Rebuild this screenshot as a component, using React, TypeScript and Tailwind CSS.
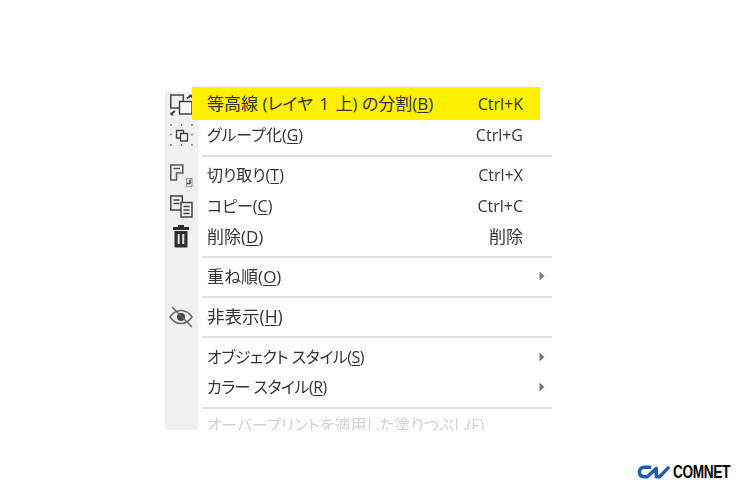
const jp = "font-['Open_Sans','Noto_Sans_CJK_JP',sans-serif]";

function U({ children }: { children: React.ReactNode }) {
  return <span className="underline underline-offset-2 decoration-1">{children}</span>;
}

function Arrow() {
  return (
    <svg width="6" height="10" viewBox="0 0 6 10" className="ml-auto mr-[7px]">
      <path d="M0.5 0.500 L5.500 5 L0.500 9.500 Z" fill="#777" />
    </svg>
  );
}

function Row({ h, icon, label, shortcut, arrow, disabled }: { h: string; icon?: React.ReactNode; label: React.ReactNode; shortcut?: React.ReactNode; arrow?: boolean; disabled?: boolean }) {
  return (
    <div className={`flex items-center ${h}`}>
      <div className="w-[33px] self-stretch bg-[#f0f0f0] flex items-center pl-[5px] shrink-0">{icon}</div>
      <div className={`pl-[9px] whitespace-nowrap ${disabled ? "text-[#d2d2d2] tracking-[-0.2px]" : ""}`}>{label}</div>
      {shortcut && <div className="ml-auto pr-[29px]">{shortcut}</div>}
      {arrow && <Arrow />}
    </div>
  );
}

function Sep({ h, top }: { h: string; top: string }) {
  return (
    <div className={`flex ${h}`}>
      <div className="w-[33px] bg-[#f0f0f0] shrink-0" />
      <div className={`flex-1 ml-[4px] ${top}`}>
        <div className="h-[2px] bg-[#e0e0e0]" />
      </div>
    </div>
  );
}

export default function App() {
  return (
    <div className="w-[750px] h-[500px] bg-white overflow-hidden flex flex-col">
      <div className={`ml-[165px] mt-[87px] w-[387px] h-[343px] overflow-hidden text-[16px] leading-none text-[#333] [font-feature-settings:'palt'] blur-[0.5px] ${jp}`}>
        <div className="flex h-[33px]">
          <div className="w-[27px] mt-[5px] bg-[#f0f0f0] shrink-0 pl-[5px]">
            <svg width="23" height="24" viewBox="0 0 23 24" fill="none" stroke="#444" strokeWidth="1.5" className="mt-[2px] overflow-visible">
              <path d="M0.800 1h12.500v13H0.800z" />
              <path d="M9.500 7.500h12.500v12.500H9.500z" fill="#f7f7f7" />
              <path d="M17 4.500l4-3" strokeWidth="2" />
              <path d="M18.500 0.800h3.500v3.500z" fill="#444" stroke="none" />
              <path d="M5 17l-4 3" strokeWidth="2" />
              <path d="M0.500 21.500v-3.500l3.500 3.500z" fill="#444" stroke="none" />
            </svg>
          </div>
          <div className="w-[348px] bg-[#fff000] flex items-center pl-[15px] whitespace-nowrap">
            <span className="text-[17px]">等高線 (レイヤ <span className="mx-[2px]">1</span> 上) の分割(<U>B</U>)</span>
            <span className="ml-auto pr-[17px]">Ctrl+K</span>
          </div>
        </div>
        <Row
          h="h-[30px]"
          label={<>グループ化(<U>G</U>)</>}
          shortcut="Ctrl+G"
          icon={
            <svg width="23" height="22" viewBox="0 0 23 22" fill="none" stroke="#444" strokeWidth="1.300">
              <path d="M1 1h.01M11.500 1h.01M22 1h.01M1 10.500h.01M22 10.500h.01M1 21h.01M11.500 21h.01M22 21h.01" stroke="#777" strokeWidth="1.800" strokeLinecap="round" />
              <path d="M6.500 6.500h7v7.500h-7z" />
              <path d="M10.500 9.500h7v7.500h-7z" fill="#f0f0f0" />
            </svg>
          }
        />
        <Sep h="h-[10px]" top="pt-[5px]" />
        <Row
          h="h-[30px]"
          label={<>切り取り(<U>T</U>)</>}
          shortcut="Ctrl+X"
          icon={
            <svg width="23" height="24" viewBox="0 0 23 24" fill="none" stroke="#555" strokeWidth="1.500">
              <path d="M0.800 2h12v8H6.500v7H0.800z" />
              <path d="M3.500 5.500h6.500" />
              <path d="M16.500 15.500h5.500v8h-5.500z" stroke="#999" strokeWidth="1.200" />
              <path d="M17 20.500h3V16.500" stroke="#444" strokeWidth="1.400" />
            </svg>
          }
        />
        <Row
          h="h-[31px]"
          label={<>コピー(<U>C</U>)</>}
          shortcut="Ctrl+C"
          icon={
            <svg width="23" height="24" viewBox="0 0 23 24" fill="none" stroke="#444" strokeWidth="1.500">
              <path d="M0.800 2h11.500v14H0.800z" />
              <path d="M3.500 6h6M3.500 9.500h6" />
              <path d="M11 8.500h11v14.500H11z" fill="#f0f0f0" />
              <path d="M13.500 12.500h6M13.500 16h6M13.500 19.500h6" />
            </svg>
          }
        />
        <Row
          h="h-[30px]"
          label={<span className="text-[17px]">削除(<U>D</U>)</span>}
          shortcut={<span className="text-[17px]">削除</span>}
          icon={
            <svg width="23" height="24" viewBox="0 0 23 24">
              <path d="M8 1h6v2h5v3H3V3h5z" fill="#2e2e2e" />
              <path d="M4.500 7h13v15.500a1 1 0 0 1-1 1h-11a1 1 0 0 1-1-1z" fill="#2e2e2e" />
              <path d="M8.700 10v10M13.300 10v10" stroke="#e8e8e8" strokeWidth="2" />
            </svg>
          }
        />
        <Sep h="h-[10px]" top="pt-[5px]" />
        <Row h="h-[30px]" label={<span className="text-[17px]">重ね順(<U>O</U>)</span>} arrow />
        <Sep h="h-[11px]" top="pt-[5px]" />
        <Row
          h="h-[30px]"
          label={<span className="text-[17.500px]">非表示(<U>H</U>)</span>}
          icon={
            <svg width="24" height="24" viewBox="0 0 24 24" fill="none" stroke="#666" strokeWidth="1.500" className="-ml-[1px] shrink-0">
              <path d="M1 12c3-4.500 6.500-6.500 11-6.500s8 2 11 6.500c-3 4.500-6.500 6.500-11 6.500S4 16.500 1 12z" />
              <circle cx="12" cy="12" r="4" fill="#444" stroke="none" />
              <path d="M3 2l20 20" />
            </svg>
          }
        />
        <Sep h="h-[10px]" top="pt-[4px]" />
        <Row h="h-[30px]" label={<span className="tracking-[-0.5px]">オブジェクト スタイル(<U>S</U>)</span>} arrow />
        <Row h="h-[30px]" label={<span className="tracking-[-0.5px]">カラー スタイル(<U>R</U>)</span>} arrow />
        <Sep h="h-[10px]" top="pt-[5px]" />
        <Row h="h-[26px]" disabled label="オーバープリントを適用した塗りつぶし(F)" />
      </div>
      <div className="mt-[33px] mr-[20px] self-end flex items-center gap-[2px] h-[18px]">
        <svg width="34" height="16" viewBox="0 0 36 16" fill="none" stroke="#1a5fb4" strokeWidth="3.600" strokeLinejoin="round">
          <path d="M15 3H8C4.500 3 2.500 5 2.500 8S4.500 13 8 13h3L20.500 4v9h3.500L34 2.500" />
        </svg>
        <div className="w-[57px] overflow-visible">
          <span className="font-['Liberation_Sans',sans-serif] font-bold text-[19px] leading-none text-black tracking-[-0.5px] inline-block origin-left scale-x-[0.72]">COMNET</span>
        </div>
      </div>
    </div>
  );
}
